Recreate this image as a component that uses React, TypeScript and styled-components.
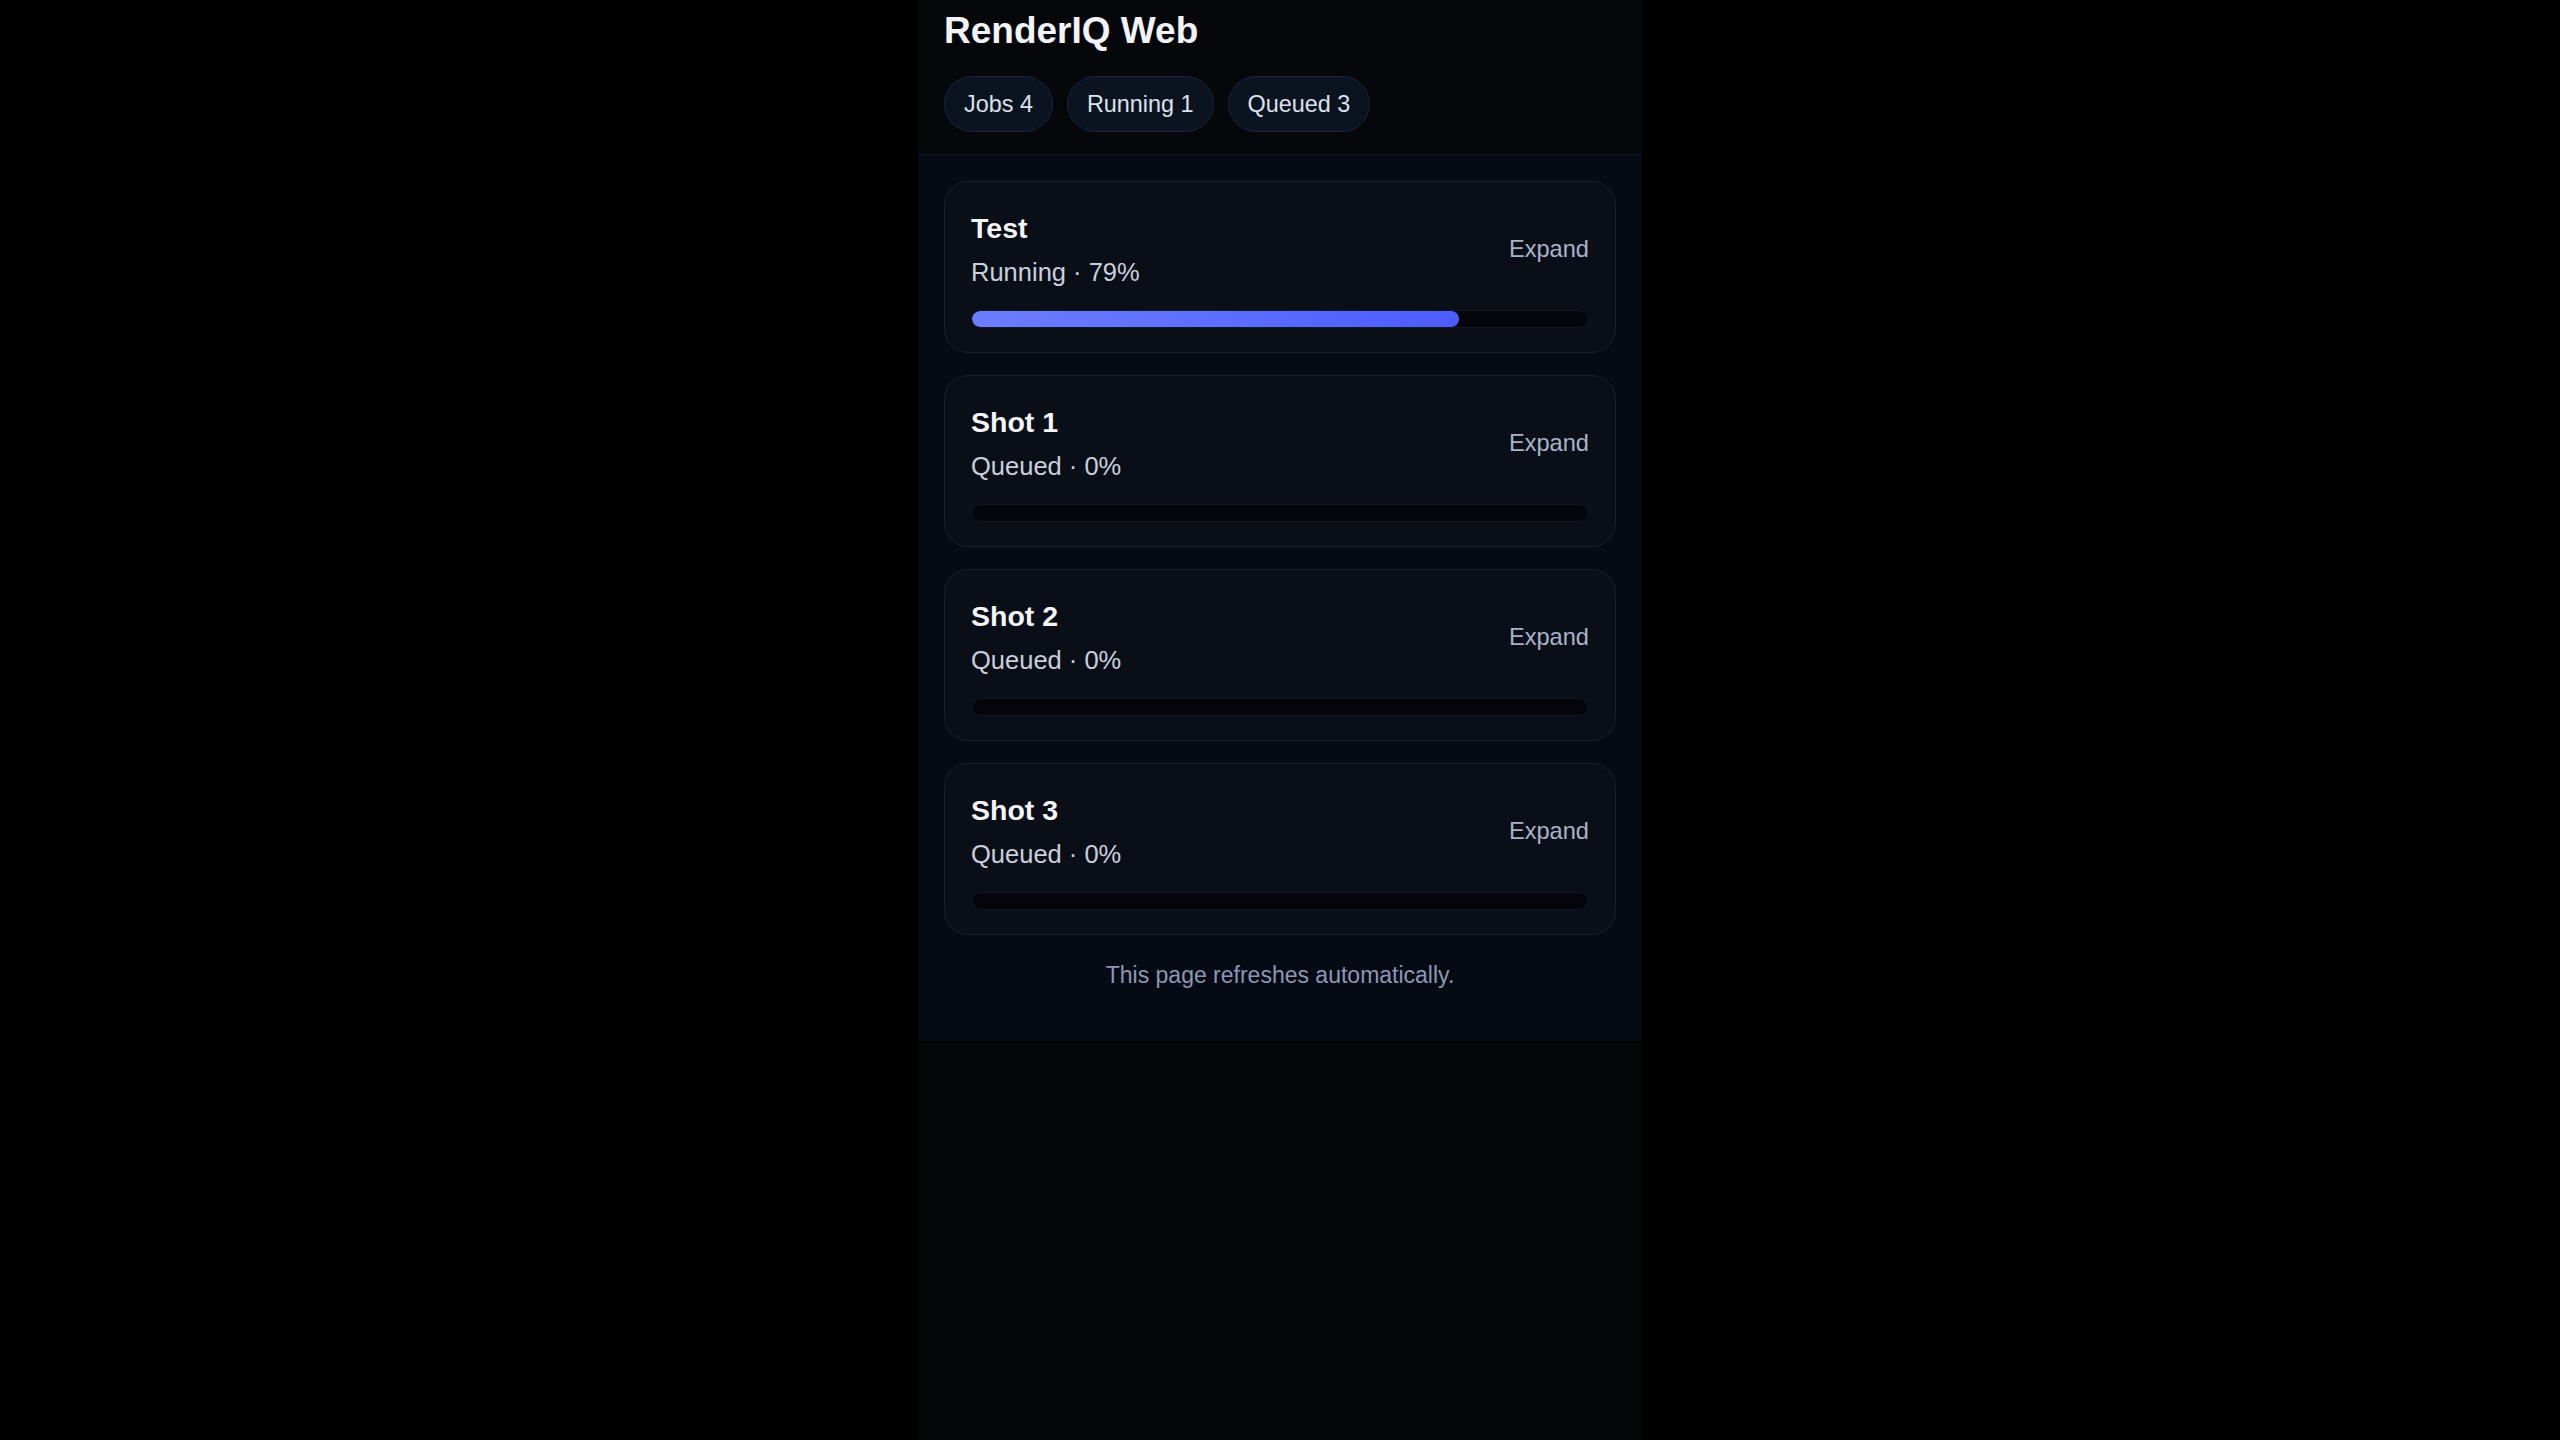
import React from "react";
import styled, { createGlobalStyle } from "styled-components";

const GlobalStyle = createGlobalStyle`
  html, body {
    margin: 0;
    padding: 0;
    background: #000000;
  }
  body {
    font-family: "Liberation Sans", Arial, Helvetica, sans-serif;
    -webkit-font-smoothing: antialiased;
  }
  * { box-sizing: border-box; }
`;

const Shell = styled.div`
  width: 724px;
  margin: 0 auto;
  min-height: 100vh;
  background: #040509;
  display: flex;
  flex-direction: column;
`;

const Header = styled.header`
  padding: 10px 26px 22px;
  background: #05070b;
  border-bottom: 1px solid #0f1623;
`;

const Title = styled.h1`
  margin: 0;
  font-size: 37px;
  line-height: 41px;
  font-weight: 700;
  color: #f1f3f8;
`;

const ChipRow = styled.div`
  display: flex;
  gap: 14px;
  margin-top: 25px;
`;

const Chip = styled.span`
  display: inline-flex;
  align-items: center;
  height: 56px;
  padding: 0 19px;
  border-radius: 999px;
  border: 1px solid #1a2639;
  background: #0b1321;
  color: #dce2ec;
  font-size: 23.4px;
`;

const Main = styled.main`
  background: #060a13;
  padding: 26px 26px 52px;
  display: flex;
  flex-direction: column;
  gap: 22px;
`;

const Card = styled.section`
  border: 1px solid #1a202e;
  background: #0a0e17;
  border-radius: 24px;
  padding: 30px 26px 24px;
`;

const CardHead = styled.div`
  display: flex;
  justify-content: space-between;
  align-items: center;
`;

const CardInfo = styled.div`
  display: flex;
  flex-direction: column;
`;

const CardTitle = styled.div`
  font-size: 28.5px;
  line-height: 32px;
  font-weight: 700;
  color: #f3f5f9;
`;

const CardStatus = styled.div`
  margin-top: 14px;
  font-size: 25.5px;
  line-height: 29px;
  color: #c9cfdd;
`;

const ExpandButton = styled.button`
  border: none;
  background: none;
  padding: 0;
  font-family: inherit;
  font-size: 23.6px;
  color: #a9b2ca;
  cursor: pointer;
`;

const Track = styled.div`
  margin-top: 23px;
  height: 18px;
  border-radius: 999px;
  background: #04060b;
  border: 1px solid #111725;
  overflow: hidden;
`;

const Fill = styled.div`
  height: 100%;
  border-radius: 999px;
  background: linear-gradient(90deg, #6c7dff 0%, #5d6eff 50%, #4c5cff 100%);
`;

const Footer = styled.p`
  margin: 5px 0 0;
  text-align: center;
  font-size: 23px;
  line-height: 27px;
  color: #8c97b6;
`;

type Job = { name: string; status: string; progress: number };

const jobs: Job[] = [
  { name: "Test", status: "Running", progress: 79 },
  { name: "Shot 1", status: "Queued", progress: 0 },
  { name: "Shot 2", status: "Queued", progress: 0 },
  { name: "Shot 3", status: "Queued", progress: 0 },
];

export default function App() {
  const running = jobs.filter((j) => j.status === "Running").length;
  const queued = jobs.filter((j) => j.status === "Queued").length;
  return (
    <>
      <GlobalStyle />
      <Shell>
        <Header>
          <Title>RenderIQ Web</Title>
          <ChipRow>
            <Chip>Jobs {jobs.length}</Chip>
            <Chip>Running {running}</Chip>
            <Chip>Queued {queued}</Chip>
          </ChipRow>
        </Header>
        <Main>
          {jobs.map((job) => (
            <Card key={job.name}>
              <CardHead>
                <CardInfo>
                  <CardTitle>{job.name}</CardTitle>
                  <CardStatus>
                    {job.status} · {job.progress}%
                  </CardStatus>
                </CardInfo>
                <ExpandButton type="button">Expand</ExpandButton>
              </CardHead>
              <Track>
                {job.progress > 0 && <Fill style={{ width: `${job.progress}%` }} />}
              </Track>
            </Card>
          ))}
          <Footer>This page refreshes automatically.</Footer>
        </Main>
      </Shell>
    </>
  );
}
